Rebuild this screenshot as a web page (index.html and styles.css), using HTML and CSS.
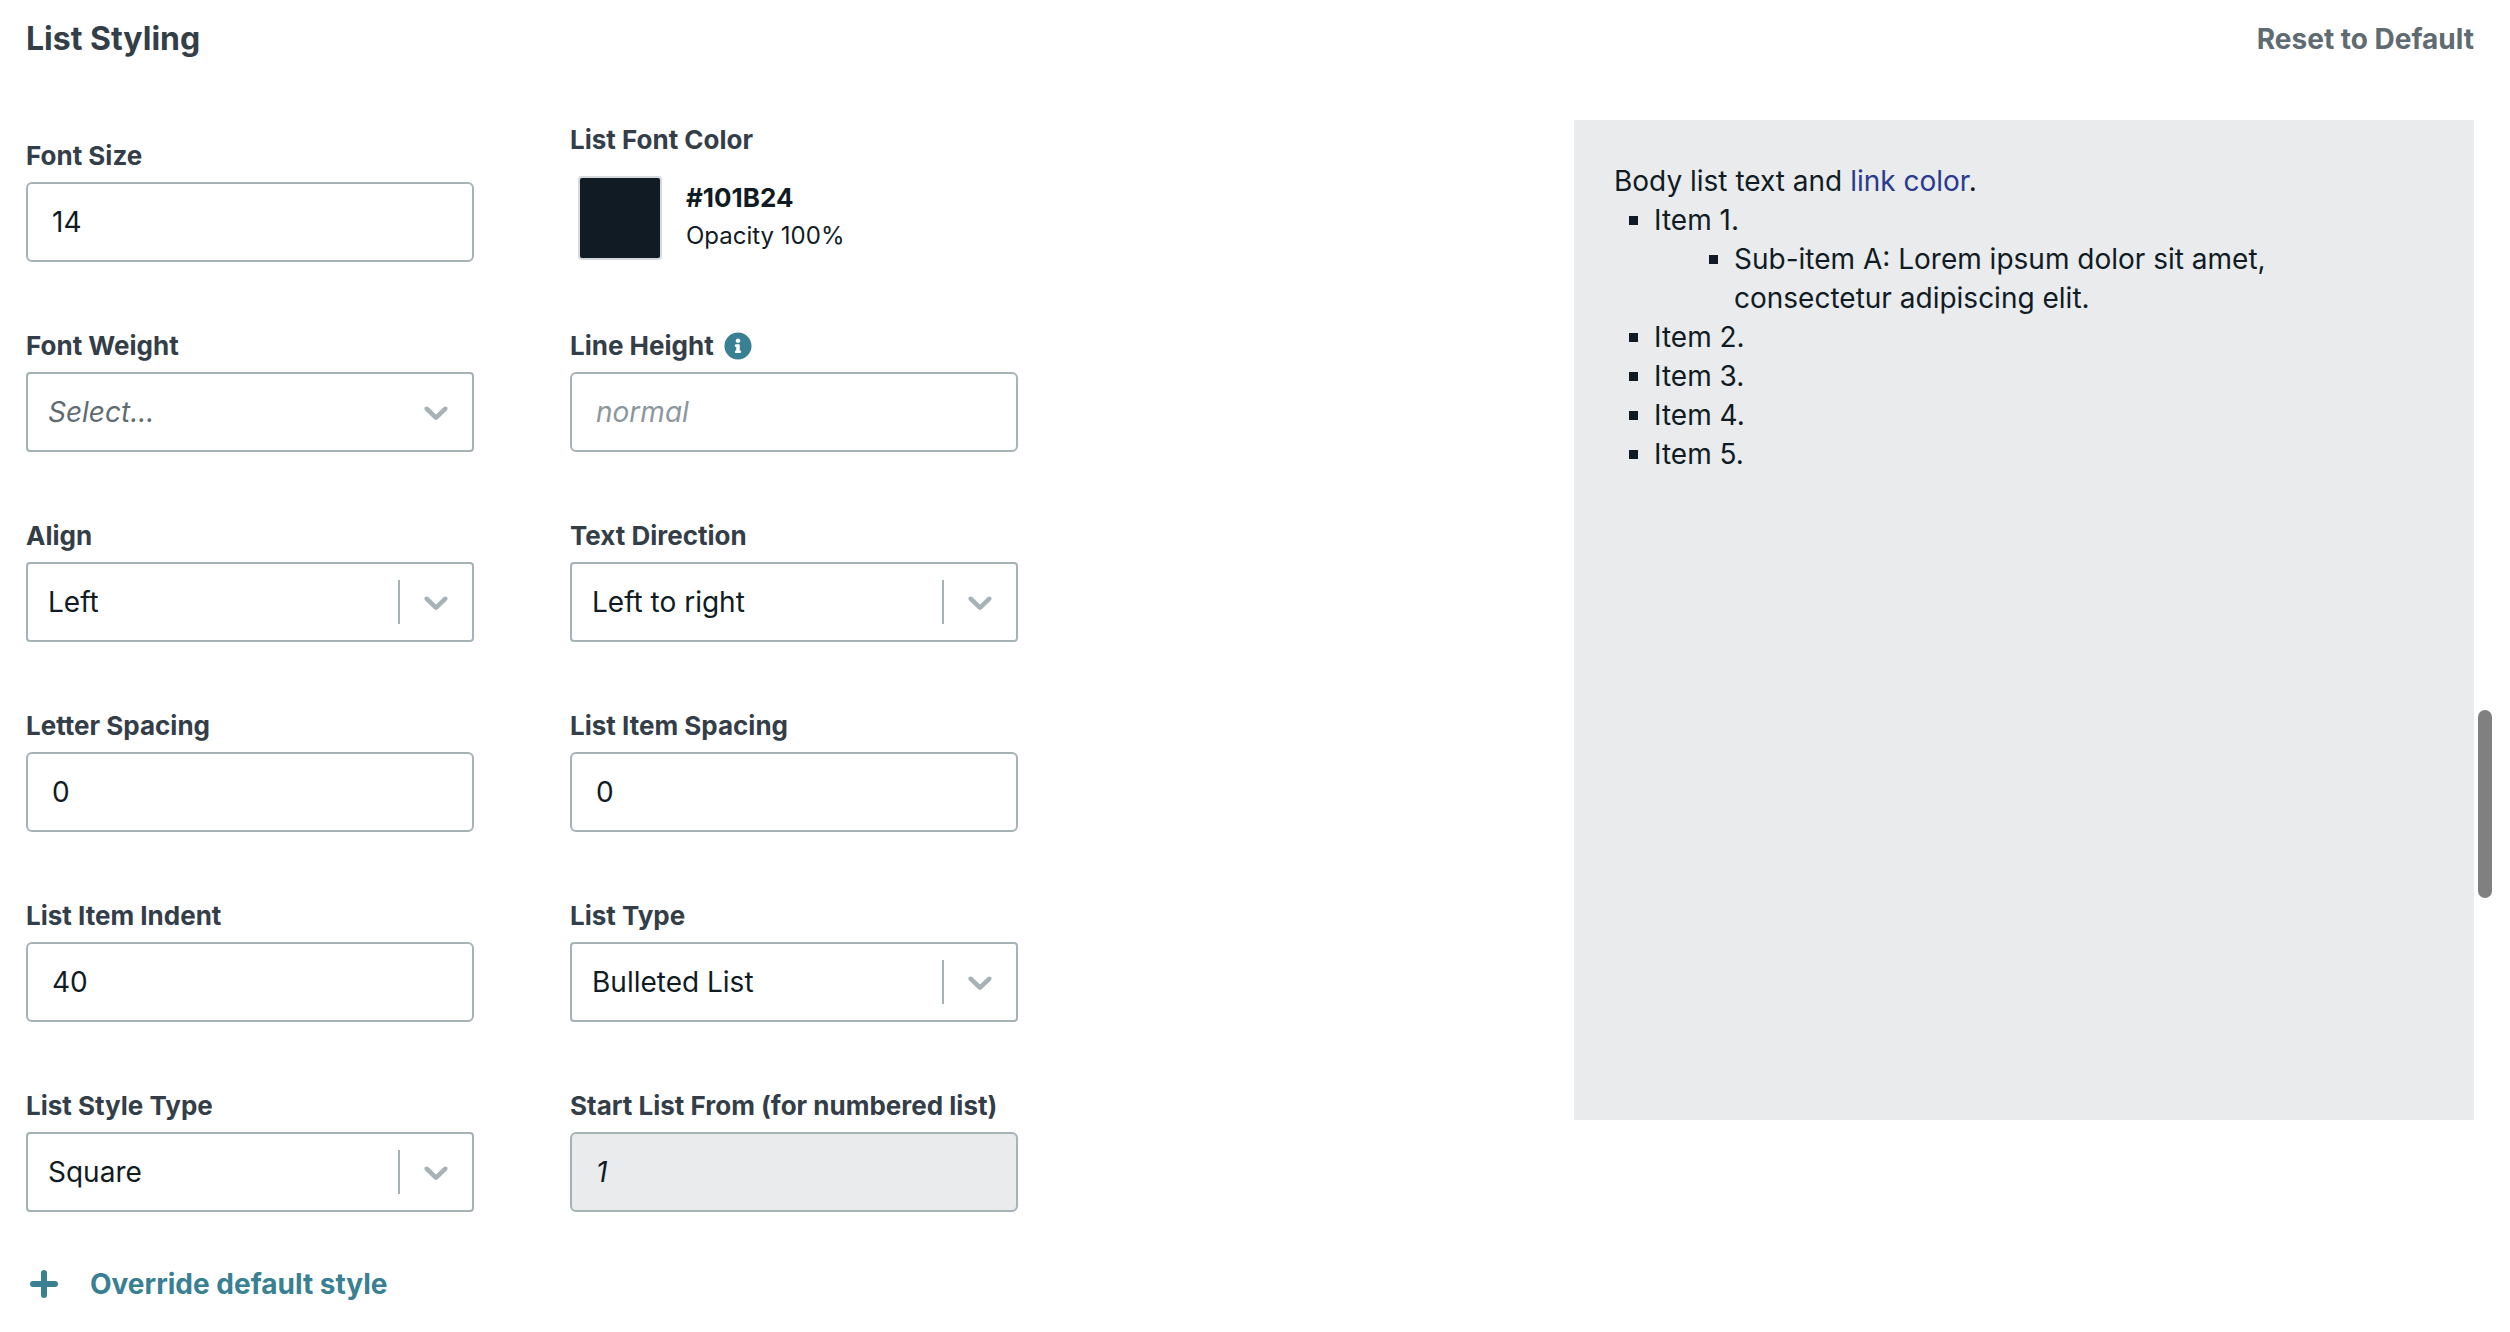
FILE: index.html
```html
<!DOCTYPE html>
<html lang="en">
<head>
<meta charset="utf-8">
<meta name="viewport" content="width=device-width, initial-scale=1">
<title>List Styling</title>
<link rel="stylesheet" href="styles.css">
</head>
<body>
<svg class="sprite" aria-hidden="true">
  <symbol id="chevron" viewBox="0 0 20 20"><path d="M4.516 7.548c0.436-0.446 1.043-0.481 1.576 0l3.908 3.747 3.908-3.747c0.533-0.481 1.141-0.446 1.574 0 0.436 0.445 0.408 1.197 0 1.615-0.406 0.418-4.695 4.502-4.695 4.502-0.217 0.223-0.502 0.335-0.787 0.335s-0.57-0.112-0.789-0.335c0 0-4.287-4.084-4.695-4.502s-0.436-1.17 0-1.615z"/></symbol>
</svg>
<main class="page">
  <header class="header">
    <h1 class="title">List Styling</h1>
    <button type="button" class="reset">Reset to Default</button>
  </header>
  <div class="content">
    <form class="form">
      <div class="fields">
        <div class="field">
          <label class="label" for="font-size">Font Size</label>
          <input class="input" id="font-size" type="text" value="14">
        </div>
        <div class="field">
          <label class="label" for="font-color">List Font Color</label>
          <div class="color">
            <button type="button" class="swatch" id="font-color"></button>
            <div class="color-text">
              <span class="hex">#101B24</span>
              <span class="opacity">Opacity 100%</span>
            </div>
          </div>
        </div>

        <div class="field">
          <label class="label" for="font-weight">Font Weight</label>
          <div class="select-box">
            <select class="select select-empty" id="font-weight"><option>Select...</option></select>
            <span class="indicator"><svg class="chevron"><use href="#chevron"/></svg></span>
          </div>
        </div>
        <div class="field">
          <div class="label-row">
            <label class="label" for="line-height">Line Height</label>
            <svg class="info" viewBox="0 0 512 512" aria-hidden="true"><path d="M256 8C119.043 8 8 119.083 8 256c0 136.997 111.043 248 248 248s248-111.003 248-248C504 119.083 392.957 8 256 8zm0 110c23.196 0 42 18.804 42 42s-18.804 42-42 42-42-18.804-42-42 18.804-42 42-42zm56 254c0 6.627-5.373 12-12 12h-88c-6.627 0-12-5.373-12-12v-24c0-6.627 5.373-12 12-12h12v-64h-12c-6.627 0-12-5.373-12-12v-24c0-6.627 5.373-12 12-12h64c6.627 0 12 5.373 12 12v100h12c6.627 0 12 5.373 12 12v24z"/></svg>
          </div>
          <input class="input" id="line-height" type="text" placeholder="normal">
        </div>

        <div class="field">
          <label class="label" for="align">Align</label>
          <div class="select-box">
            <select class="select" id="align"><option>Left</option></select>
            <span class="indicator divided"><svg class="chevron"><use href="#chevron"/></svg></span>
          </div>
        </div>
        <div class="field">
          <label class="label" for="direction">Text Direction</label>
          <div class="select-box">
            <select class="select" id="direction"><option>Left to right</option></select>
            <span class="indicator divided"><svg class="chevron"><use href="#chevron"/></svg></span>
          </div>
        </div>

        <div class="field">
          <label class="label" for="letter-spacing">Letter Spacing</label>
          <input class="input" id="letter-spacing" type="text" value="0">
        </div>
        <div class="field">
          <label class="label" for="item-spacing">List Item Spacing</label>
          <input class="input" id="item-spacing" type="text" value="0">
        </div>

        <div class="field">
          <label class="label" for="item-indent">List Item Indent</label>
          <input class="input" id="item-indent" type="text" value="40">
        </div>
        <div class="field">
          <label class="label" for="list-type">List Type</label>
          <div class="select-box">
            <select class="select" id="list-type"><option>Bulleted List</option></select>
            <span class="indicator divided"><svg class="chevron"><use href="#chevron"/></svg></span>
          </div>
        </div>

        <div class="field">
          <label class="label" for="style-type">List Style Type</label>
          <div class="select-box">
            <select class="select" id="style-type"><option>Square</option></select>
            <span class="indicator divided"><svg class="chevron"><use href="#chevron"/></svg></span>
          </div>
        </div>
        <div class="field">
          <label class="label" for="start-from">Start List From (for numbered list)</label>
          <input class="input" id="start-from" type="text" value="1" disabled>
        </div>
      </div>
      <button type="button" class="override">
        <svg class="plus" viewBox="0 0 28 28" aria-hidden="true"><path d="M14 3v22M3 14h22"/></svg>
        Override default style
      </button>
    </form>
    <section class="preview">
      <p class="preview-text">Body list text and <a class="link" href="#">link color</a>.</p>
      <ul class="list">
        <li>Item 1.
          <ul class="list sublist">
            <li>Sub-item A: Lorem ipsum dolor sit amet, consectetur adipiscing elit.</li>
          </ul>
        </li>
        <li>Item 2.</li>
        <li>Item 3.</li>
        <li>Item 4.</li>
        <li>Item 5.</li>
      </ul>
    </section>
  </div>
</main>
<div class="scroll-thumb"></div>
</body>
</html>
```
FILE: styles.css
```css
:root {
  --ink: #101b24;
  --label: #333e48;
  --muted: #5f6b73;
  --line: #a7b2b6;
  --teal: #388092;
  --panel: #e9ebec;
}

* {
  box-sizing: border-box;
}

body {
  margin: 0;
  background: #fff;
  color: var(--ink);
  font-family: Inter, "Liberation Sans", sans-serif;
  font-size: 28px;
}

button,
input,
select {
  font: inherit;
  color: inherit;
}

button {
  padding: 0;
  border: 0;
  background: none;
  cursor: pointer;
}

.sprite {
  display: none;
}

.page {
  padding: 0 36px 28px 26px;
}

.header {
  display: flex;
  align-items: center;
  justify-content: space-between;
  height: 78px;
  margin-bottom: 42px;
}

.title {
  margin: 0;
  color: var(--label);
  font-size: 32px;
  line-height: 40px;
}

.reset {
  color: var(--muted);
  font-weight: 700;
  line-height: 40px;
}

.content {
  display: flex;
  align-items: flex-start;
  justify-content: space-between;
  gap: 96px;
}

.form {
  flex: 0 1 992px;
  padding-top: 4px;
}

.fields {
  display: grid;
  grid-template-columns: 1fr 1fr;
  align-items: end;
  gap: 68px 96px;
}

.field {
  display: flex;
  flex-direction: column;
  gap: 10px;
}

.label-row {
  display: flex;
  align-items: center;
  gap: 10px;
}

.label {
  color: var(--label);
  font-size: 26px;
  font-weight: 700;
  line-height: 32px;
}

.info {
  width: 28px;
  height: 28px;
  fill: var(--teal);
}

.input,
.select {
  width: 100%;
  height: 80px;
  border: 2px solid var(--line);
  background: #fff;
}

.input {
  padding: 0 24px;
  border-radius: 6px;
}

.input::placeholder {
  color: #8c979d;
  font-style: italic;
  opacity: 1;
}

.input:disabled {
  background: var(--panel);
  color: var(--ink);
  font-style: italic;
}

.select-box {
  display: grid;
  align-items: center;
}

.select-box > * {
  grid-area: 1 / 1;
}

.select {
  appearance: none;
  padding: 0 80px 0 20px;
  border-radius: 4px;
}

.select-empty {
  color: var(--muted);
  font-style: italic;
}

.indicator {
  display: flex;
  align-items: center;
  justify-self: end;
  height: 44px;
  padding: 0 18px 0 16px;
  pointer-events: none;
}

.divided {
  border-left: 2px solid var(--line);
}

.chevron {
  width: 40px;
  height: 40px;
  fill: var(--line);
}

.color {
  display: flex;
  gap: 24px;
  padding: 10px 8px 2px;
}

.swatch {
  width: 84px;
  height: 84px;
  border: 2px solid #d5d9dc;
  border-radius: 4px;
  background: var(--ink);
}

.color-text {
  display: flex;
  flex-direction: column;
}

.hex {
  font-size: 26px;
  font-weight: 700;
  line-height: 44px;
}

.opacity {
  font-size: 24px;
  line-height: 32px;
}

.override {
  display: flex;
  align-items: center;
  gap: 32px;
  margin-top: 52px;
  padding-left: 4px;
  color: var(--teal);
  font-weight: 700;
  line-height: 40px;
}

.plus {
  width: 28px;
  height: 28px;
  fill: none;
  stroke: currentColor;
  stroke-width: 6;
  stroke-linecap: round;
}

.preview {
  flex: 0 1 900px;
  min-height: 1000px;
  padding: 42px 60px 40px 40px;
  background: var(--panel);
  line-height: 39px;
}

.preview-text {
  margin: 0;
}

.link {
  color: #2b3990;
  text-decoration: none;
}

.list {
  margin: 0;
  padding-left: 40px;
  list-style: square;
}

.sublist {
  padding-left: 80px;
}

.scroll-thumb {
  position: absolute;
  top: 710px;
  right: 18px;
  width: 14px;
  height: 188px;
  border-radius: 7px;
  background: #808080;
}
```
